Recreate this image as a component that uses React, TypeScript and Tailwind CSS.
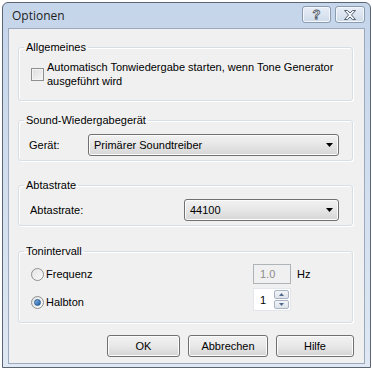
import type { ReactNode } from "react";

const dlgFont = { fontFamily: '"Liberation Sans", Arial, sans-serif' };

function GroupBox({ title, className, children }: { title: string; className?: string; children: ReactNode }) {
  return (
    <fieldset
      className={
        "rounded-[3px] border border-[#d5dfe5] shadow-[inset_1px_1px_0_#fff,1px_1px_0_#fff] " + (className ?? "")
      }
    >
      <legend className="ml-[5px] px-[2px] text-[11px] leading-[14px]">{title}</legend>
      {children}
    </fieldset>
  );
}

function ComboBox({ value, className }: { value: string; className?: string }) {
  return (
    <div
      className={
        "flex h-[22px] items-center justify-between rounded-[3px] border border-[#707070] bg-gradient-to-b from-[#f2f2f2] via-[#e6e6e6] to-[#d6d6d6] pl-[5px] pr-[5px] shadow-[inset_0_0_0_1px_#fcfcfc] " +
        (className ?? "")
      }
    >
      <span className="text-[11px] leading-[14px]">{value}</span>
      <svg width="7" height="4" viewBox="0 0 7 4">
        <path d="M0 0h7L3.5 4z" fill="#000" />
      </svg>
    </div>
  );
}

function PushButton({ label, className }: { label: string; className?: string }) {
  return (
    <button
      className={
        "flex h-[22px] items-center justify-center rounded-[3px] border border-[#707070] bg-gradient-to-b from-[#f2f2f2] via-[#e8e8e8] to-[#d4d4d4] text-[11px] leading-[14px] shadow-[inset_0_0_0_1px_#fcfcfc] " +
        (className ?? "")
      }
    >
      {label}
    </button>
  );
}

function Radio({ checked }: { checked?: boolean }) {
  return (
    <span className="flex h-[13px] w-[13px] items-center justify-center rounded-full border border-[#8e8f8f] bg-gradient-to-br from-[#e4e4e4] to-[#fafafa]">
      {checked && (
        <span className="h-[7px] w-[7px] rounded-full border border-[#2a5d92] bg-gradient-to-br from-[#86b6e4] to-[#1d5ea8]" />
      )}
    </span>
  );
}

export default function App() {
  return (
    <div className="h-[371px] w-[372px] bg-white pl-[2px] pt-[2px] text-black" style={dlgFont}>
      <div className="flex h-[366px] w-[369px] flex-col rounded-t-[6px] border border-[#5b6674] bg-gradient-to-b from-[#c5d5ea] to-[#dfe8f3]">
        {/* ── Title bar ─────────────────────────────── */}
        <div className="flex h-[25px] shrink-0 items-center justify-between pl-[9px] pr-[5px]">
          <span
            className="text-[12px] leading-[16px] text-[#1e1e1e]"
            style={{ fontFamily: '"Open Sans", "Noto Sans", sans-serif' }}
          >
            Optionen
          </span>
          <div className="flex gap-[4px] pb-[2px]">
            <div className="flex h-[17px] w-[29px] items-center justify-center rounded-[3px] border border-[#8b9bb0] bg-gradient-to-b from-[#e8eef6] to-[#cfdbea] shadow-[inset_0_0_0_1px_#f4f7fb]">
              <span className="text-[13px] font-bold leading-[13px] text-[#f4f6f9] [-webkit-text-stroke:0.8px_#4b5563]">?</span>
            </div>
            <div className="flex h-[17px] w-[30px] items-center justify-center rounded-[3px] border border-[#8b9bb0] bg-gradient-to-b from-[#e8eef6] to-[#cfdbea] shadow-[inset_0_0_0_1px_#f4f7fb]">
              <svg width="12" height="10" viewBox="0 0 12 10">
                <path
                  d="M0.5 0.5h3l2.5 2.5 2.5-2.5h3l-4 4.5 4 4.5h-3l-2.5-2.5-2.5 2.5h-3l4-4.5z"
                  fill="#f2f5f9"
                  stroke="#4b5563"
                  strokeWidth="0.9"
                />
              </svg>
            </div>
          </div>
        </div>

        {/* ── Client area ───────────────────────────── */}
        <div className="mx-[5px] mb-[3px] flex flex-1 flex-col border border-[#9aa9bd] bg-[#f0f0f0] pl-[9px] pr-[11px] pt-[11px]">
          <GroupBox title="Allgemeines" className="h-[61px]">
            <div className="mt-[6px] flex items-center gap-[3px] pl-[12px]">
              <span className="h-[13px] w-[13px] shrink-0 border border-[#8e8f8f] bg-gradient-to-br from-[#dcdcdc] to-[#f7f7f7] shadow-[inset_0_0_0_1px_#f4f4f4]" />
              <span className="text-[11px] leading-[14px]">
                Automatisch Tonwiedergabe starten, wenn Tone Generator
                <br />
                ausgeführt wird
              </span>
            </div>
          </GroupBox>

          <GroupBox title="Sound-Wiedergabegerät" className="mt-[12px] h-[48px]">
            <div className="mt-[7px] flex items-center pl-[10px]">
              <span className="w-[59px] text-[11px] leading-[14px]">Gerät:</span>
              <ComboBox value="Primärer Soundtreiber" className="w-[251px]" />
            </div>
          </GroupBox>

          <GroupBox title="Abtastrate" className="mt-[17px] h-[48px]">
            <div className="mt-[7px] flex items-center pl-[11px]">
              <span className="w-[154px] text-[11px] leading-[14px]">Abtastrate:</span>
              <ComboBox value="44100" className="w-[155px]" />
            </div>
          </GroupBox>

          <GroupBox title="Tonintervall" className="mt-[18px] h-[79px]">
            <div className="mt-[6px] grid grid-cols-[222px_38px_auto] items-center gap-y-[4px] pl-[12px]">
              <label className="flex items-center gap-[2px] text-[11px] leading-[14px]">
                <Radio />
                Frequenz
              </label>
              <div className="flex h-[20px] items-center border border-[#afb4b9] bg-[#f0f0f0] pl-[6px] text-[11px] leading-[14px] text-[#8d8d8d]">
                1.0
              </div>
              <span className="pl-[6px] text-[11px] leading-[14px]">Hz</span>

              <label className="flex items-center gap-[2px] pt-[5px] text-[11px] leading-[14px]">
                <Radio checked />
                Halbton
              </label>
              <div className="flex h-[23px] items-stretch border border-[#e3e6ea] bg-white">
                <span className="flex flex-1 items-center pl-[6px] text-[11px] leading-[14px]">1</span>
                <div className="flex w-[16px] flex-col gap-[1px] py-[1px] pr-[1px]">
                  <span className="flex flex-1 items-center justify-center rounded-[2px] border border-[#a9b4c2] bg-gradient-to-b from-[#f3f5f8] to-[#dde3ea]">
                    <svg width="5" height="3" viewBox="0 0 5 3">
                      <path d="M0 3h5L2.5 0z" fill="#4f6a8c" />
                    </svg>
                  </span>
                  <span className="flex flex-1 items-center justify-center rounded-[2px] border border-[#a9b4c2] bg-gradient-to-b from-[#f3f5f8] to-[#dde3ea]">
                    <svg width="5" height="3" viewBox="0 0 5 3">
                      <path d="M0 0h5L2.5 3z" fill="#4f6a8c" />
                    </svg>
                  </span>
                </div>
              </div>
              <span />
            </div>
          </GroupBox>

          {/* ── Dialog buttons ──────────────────────── */}
          <div className="mr-[-1px] mt-[12px] flex justify-end gap-[8px]">
            <PushButton label="OK" className="w-[73px]" />
            <PushButton label="Abbrechen" className="w-[80px]" />
            <PushButton label="Hilfe" className="w-[78px]" />
          </div>
        </div>
      </div>
    </div>
  );
}
